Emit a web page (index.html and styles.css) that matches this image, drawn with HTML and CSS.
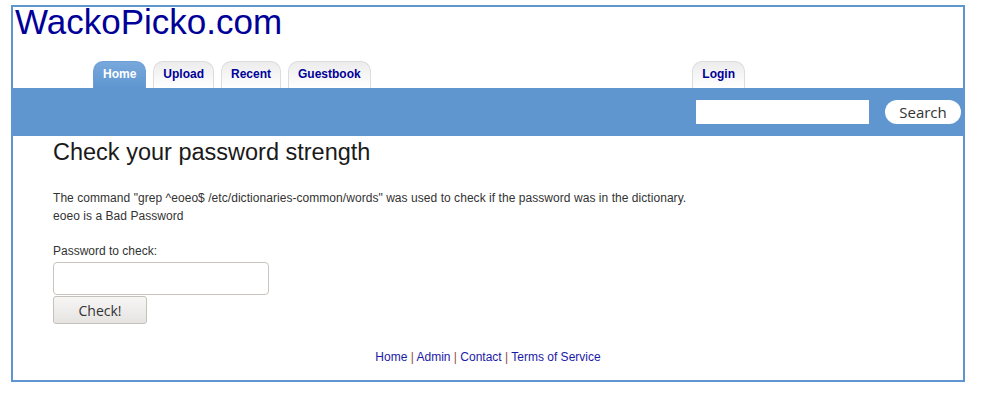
FILE: index.html
```html
<!DOCTYPE html>
<html>
<head>
<meta charset="utf-8">
<title>WackoPicko.com</title>
<link rel="stylesheet" href="styles.css">
</head>
<body>
<div class="page">
  <div class="header">
    <a class="logo" href="#">WackoPicko.com</a>
  </div>
  <ul class="tabs">
    <li class="tab active"><a href="#">Home</a></li>
    <li class="tab"><a href="#">Upload</a></li>
    <li class="tab"><a href="#">Recent</a></li>
    <li class="tab"><a href="#">Guestbook</a></li>
    <li class="tab login"><a href="#">Login</a></li>
  </ul>
  <div class="bar">
    <input class="search-input" type="text">
    <button class="search-btn">Search</button>
  </div>
  <div class="content">
    <h2 class="title">Check your password strength</h2>
    <p class="msg">The command "grep ^eoeo$ /etc/dictionaries-common/words" was used to check if the password was in the dictionary.<br>eoeo is a Bad Password</p>
    <form class="form">
      <label class="label">Password to check:</label>
      <input class="pw-input" type="text">
      <button class="check-btn" type="button">Check!</button>
    </form>
    <div class="footer">
      <a href="#">Home</a> <span class="sep">|</span> <a href="#">Admin</a> <span class="sep">|</span> <a href="#">Contact</a> <span class="sep">|</span> <a href="#">Terms of Service</a>
    </div>
  </div>
</div>
</body>
</html>
```
FILE: styles.css
```css
* { box-sizing: border-box; }
html, body { margin: 0; padding: 0; background: #fff; }
body { font-family: "Liberation Sans", Arial, sans-serif; }

.page {
  margin: 5px 0 0 11px;
  width: 954px;
  border: 2px solid #5f96d0;
}

.header { height: 30px; padding-left: 2px; }
.logo {
  font-size: 35px;
  line-height: 30px;
  color: #000099;
  text-decoration: none;
  display: block;
}

.tabs {
  list-style: none;
  margin: 24px 0 0;
  padding: 0 218px 0 80px;
  display: flex;
  gap: 7px;
  height: 27px;
}
.tab {
  height: 27px;
  border: 1px solid #dcdcdc;
  border-bottom: none;
  border-radius: 10px 10px 0 0;
  background: linear-gradient(#ececec, #ffffff);
  padding: 0 9px 3px;
  display: flex;
  align-items: center;
}
.tab a {
  font-size: 12px;
  font-weight: bold;
  color: #000099;
  text-decoration: none;
  line-height: 14px;
}
.tab.active {
  border-color: #6a9ed5;
  background: linear-gradient(#78a8dc, #5f96d0);
}
.tab.active a { color: #fff; }
.tab.login { margin-left: auto; }

.bar {
  background: #5f96d0;
  height: 48px;
  display: flex;
  align-items: center;
  justify-content: flex-end;
  padding: 0 2px 0 0;
  gap: 16px;
}
.search-input {
  width: 173px;
  height: 24px;
  border: none;
  background: #fff;
  margin: 0;
}
.search-btn {
  width: 76px;
  height: 24px;
  border: none;
  border-radius: 12px;
  background: #fff;
  font-family: "Open Sans", sans-serif;
  font-size: 15px;
  color: #333;
  padding: 0;
  line-height: 20px;
}

.content { padding: 0 40px 14px; }
.title {
  margin: 2px 0 0;
  font-size: 23.5px;
  line-height: 28px;
  font-weight: normal;
  color: #1a1a1a;
}
.msg {
  margin: 23px 0 0;
  font-size: 12px;
  line-height: 18px;
  color: #333;
  letter-spacing: 0.05px;
}
.form { margin: 17px 0 0; display: flex; flex-direction: column; align-items: flex-start; }
.label {
  font-size: 12px;
  line-height: 18px;
  color: #333;
}
.pw-input {
  margin: 2px 0 0;
  width: 216px;
  height: 33px;
  border: 1px solid #c9c5be;
  border-radius: 4px;
  background: #fff;
}
.check-btn {
  margin: 1px 0 0;
  width: 94px;
  height: 28px;
  border: 1px solid #c4c0ba;
  border-radius: 3px;
  background: linear-gradient(#f7f6f5, #e6e4e1);
  font-family: "Open Sans", sans-serif;
  font-size: 14px;
  color: #333;
  padding: 0;
}
.footer {
  margin-top: 24px;
  text-align: center;
  font-size: 12px;
  line-height: 18px;
}
.footer a { color: #1a1aa6; text-decoration: none; }
.footer .sep { color: #8a4b3b; }
```
